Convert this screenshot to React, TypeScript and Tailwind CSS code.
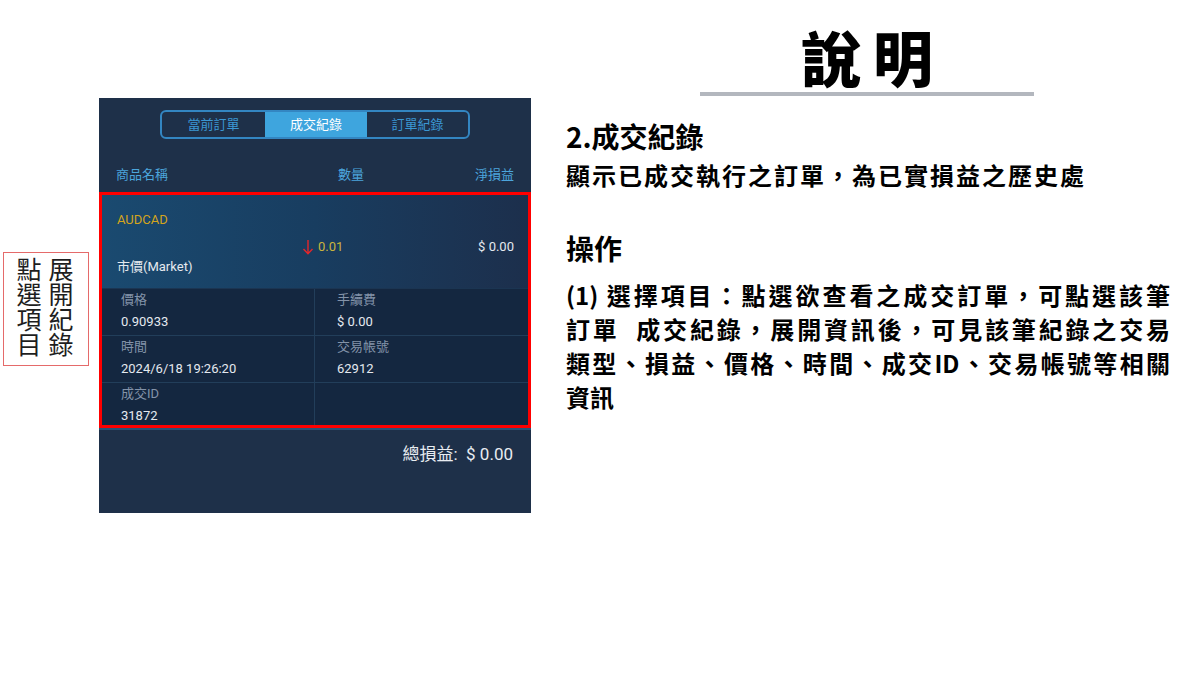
import React from "react";

const Arrow = () => (
  <svg width="12" height="16" viewBox="0 0 12 16" className="shrink-0">
    <path d="M6 1 V14.5 M1.5 10 L6 14.8 L10.5 10" stroke="#e3262b" strokeWidth="1.4" fill="none" />
  </svg>
);

const Cell = ({ label, value, right }: { label: string; value?: string; right?: boolean }) => (
  <div className={`h-[46px] pt-[2px] ${right ? "pl-[22px]" : "pl-[19px] border-r border-[#223e5a]"}`}>
    <div className="h-[18px] leading-[18px] text-[13px] text-[#8393a9]">{label}</div>
    {value !== undefined && (
      <div className="mt-[4px] h-[18px] leading-[18px] text-[13px] text-[#e4e9ef]">{value}</div>
    )}
  </div>
);

export default function App() {
  return (
    <div className="w-[1200px] h-[675px] bg-white flex font-[family-name:Roboto,'Noto_Sans_CJK_TC',sans-serif] overflow-hidden">
      {/* left vertical label */}
      <div className="mt-[252px] ml-[3px] w-[86px] h-[114px] border border-[#e56a6a] flex pl-[12px] pt-[4px] gap-[6px] text-[25px] leading-[26px] text-[#1e1e1e] font-[family-name:'Noto_Sans_CJK_TC',sans-serif]">
        <div className="[writing-mode:vertical-lr]">點選項目</div>
        <div className="[writing-mode:vertical-lr]">展開紀錄</div>
      </div>

      {/* phone panel */}
      <div className="mt-[98px] ml-[10px] w-[432px] h-[415px] bg-[#1e3049] flex flex-col">
        <div className="mt-[12px] mx-auto w-[310px] h-[29px] border-2 border-[#3386c2] rounded-[6px] flex overflow-hidden text-[13px]">
          <div className="w-[103px] flex items-center justify-center text-[#3b97d3]">當前訂單</div>
          <div className="w-[102px] flex items-center justify-center bg-[#3ea5de] text-white">成交紀錄</div>
          <div className="flex-1 flex items-center justify-center text-[#3b97d3]">訂單紀錄</div>
        </div>
        <div className="mt-[26px] h-[20px] px-[17px] flex items-center text-[13px] text-[#4ca5dc]">
          <div className="w-[222px]">商品名稱</div>
          <div>數量</div>
          <div className="flex-1 text-right">淨損益</div>
        </div>

        <div className="mt-[7px] border-[3px] border-[#ff0000] flex flex-col">
          <div className="h-[94px] bg-gradient-to-r from-[#1a4a70] via-[#183d60] to-[#1c2f4c] flex border-b border-[#1b3552]">
            <div className="w-[200px] pl-[15px] pt-[16px] pb-[12px] flex flex-col justify-between">
              <div className="h-[18px] leading-[18px] text-[13px] text-[#d4a41c]">AUDCAD</div>
              <div className="h-[18px] leading-[18px] text-[13px] text-[#e6eaef]">市價(Market)</div>
            </div>
            <div className="flex items-center pt-[10px] gap-[4px]">
              <Arrow />
              <span className="text-[13px] text-[#cbb43c] leading-[18px]">0.01</span>
            </div>
            <div className="flex-1 flex items-center justify-end pr-[14px] pt-[10px] text-[13px] text-[#e4e9ef]">$ 0.00</div>
          </div>
          <div className="bg-[#142740] flex flex-col">
            <div className="grid grid-cols-2 border-b border-[#223e5a]">
              <Cell label="價格" value="0.90933" />
              <Cell label="手續費" value="$ 0.00" right />
            </div>
            <div className="grid grid-cols-2 border-b border-[#223e5a]">
              <Cell label="時間" value="2024/6/18 19:26:20" />
              <Cell label="交易帳號" value="62912" right />
            </div>
            <div className="grid grid-cols-2 h-[42px] overflow-hidden">
              <Cell label="成交ID" value="31872" />
              <Cell label="" right />
            </div>
          </div>
        </div>
        <div className="h-[2px] bg-[#2a5275]"></div>
        <div className="mt-[14px] pr-[18px] text-right text-[17px] leading-[20px] text-[#e8ecf1]">總損益:&nbsp; $ 0.00</div>
      </div>

      {/* right explanation */}
      <div className="ml-[35px] flex flex-col font-[family-name:'Noto_Sans_CJK_TC',sans-serif] text-black">
        <div className="ml-[134px] w-[334px] flex flex-col items-center">
          <div className="mt-[24px] h-[64px] leading-[64px] text-[60px] font-black tracking-[12px] pl-[12px]">說明</div>
          <div className="mt-[4px] w-[334px] h-[4px] bg-[#b3b7be]"></div>
        </div>
        <div className="mt-[22px] text-[28px] leading-[36px] font-bold">2.成交紀錄</div>
        <div className="mt-[4px] text-[24px] leading-[34px] font-bold tracking-[2px]">顯示已成交執行之訂單，為已實損益之歷史處</div>
        <div className="mt-[38px] text-[28px] leading-[36px] font-bold">操作</div>
        <div className="mt-[12px] w-[604px] text-[24px] leading-[34px] font-bold">
          <div className="text-justify [text-align-last:justify]">(1) 選擇項目：點選欲查看之成交訂單，可點選該筆</div>
          <div className="text-justify [text-align-last:justify]">訂單&nbsp;&nbsp;成交紀錄，展開資訊後，可見該筆紀錄之交易</div>
          <div className="text-justify [text-align-last:justify]">類型、損益、價格、時間、成交ID、交易帳號等相關</div>
          <div>資訊</div>
        </div>
      </div>
    </div>
  );
}
